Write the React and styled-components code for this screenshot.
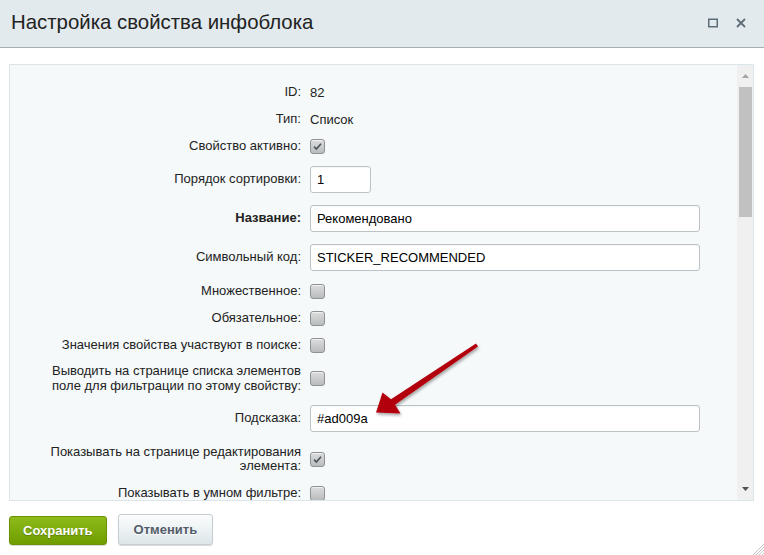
import React from "react";
import styled, { createGlobalStyle } from "styled-components";

const Global = createGlobalStyle`
  html, body { margin: 0; padding: 0; background: #fff; }
  body { font-family: "Liberation Sans", Arial, sans-serif; }
  * { box-sizing: border-box; }
`;

const Dialog = styled.div`
  position: relative;
  width: 764px;
  height: 555px;
  display: flex;
  flex-direction: column;
  background: #fff;
  overflow: hidden;
`;

const Header = styled.div`
  height: 48px;
  flex: none;
  background: #e3eaed;
  border-bottom: 1px solid #a6aeb2;
  display: flex;
  align-items: center;
  padding: 0 18px 2px 11px;
`;

const Title = styled.h1`
  margin: 0;
  flex: 1;
  font-weight: normal;
  font-size: 20.4px;
  color: #222;
`;

const HeaderIcons = styled.div`
  display: flex;
  align-items: center;
  gap: 18px;
`;

const Body = styled.div`
  padding: 16px 10px 0 9px;
`;

const Panel = styled.div`
  height: 437px;
  border: 1px solid #dce6ea;
  background: #f5f9f9;
  display: flex;
`;

const Content = styled.div`
  flex: 1;
  overflow: hidden;
  padding-top: 13.5px;
`;

const Row = styled.div`
  display: grid;
  grid-template-columns: 291px 1fr;
  column-gap: 9px;
  align-items: center;
  height: ${(p) => p.$h || 27}px;
  font-size: 13px;
  color: #222;
`;

const Label = styled.div`
  text-align: right;
  line-height: 14.5px;
  font-weight: ${(p) => (p.$bold ? "bold" : "normal")};
`;

const Value = styled.div`
  display: flex;
  align-items: center;
`;

const Input = styled.div`
  height: 27px;
  width: ${(p) => p.$w}px;
  background: #fff;
  border: 1px solid #bcc3c7;
  border-radius: 3px;
  padding: 0 6px;
  display: flex;
  align-items: center;
  font-size: 13px;
  color: #000;
  box-shadow: inset 0 1px 1px rgba(0,0,0,0.04);
`;

const Check = styled.span`
  width: 15px;
  height: 15px;
  border-radius: 3px;
  border: 1px solid #8e9295;
  background: linear-gradient(#dcdcdc, #b9bcbe);
  box-shadow: inset 0 1px 0 rgba(255,255,255,0.6);
  display: inline-flex;
  align-items: center;
  justify-content: center;
`;

const Scrollbar = styled.div`
  width: 16px;
  flex: none;
  background: #f0f0f0;
  display: flex;
  flex-direction: column;
  align-items: center;
  padding: 5px 0;
`;

const ArrowBtn = styled.div`
  height: 12px;
  display: flex;
  align-items: center;
  justify-content: center;
`;

const Thumb = styled.div`
  width: 13px;
  height: 130px;
  margin-top: 5px;
  background: #c1c1c1;
`;

const Track = styled.div`
  flex: 1;
`;

const Footer = styled.div`
  display: flex;
  align-items: center;
  gap: 11px;
  padding: 13px 9px 0 9px;
`;

const Button = styled.button`
  height: ${(p) => (p.$primary ? 29 : 31)}px;
  padding: 0 ${(p) => (p.$primary ? 13 : 15)}px;
  border-radius: 3px;
  font-family: "Liberation Sans", Arial, sans-serif;
  font-size: 13px;
  font-weight: bold;
  cursor: pointer;
  color: ${(p) => (p.$primary ? "#fff" : "#535c69")};
  border: 1px solid ${(p) => (p.$primary ? "#6a9200" : "#c6cdd3")};
  background: ${(p) =>
    p.$primary
      ? "linear-gradient(#8ebb1b, #6f9d00)"
      : "linear-gradient(#fbfdfd, #dde6e9)"};
  text-shadow: ${(p) => (p.$primary ? "0 1px 1px rgba(0,0,0,0.25)" : "0 1px 0 #fff")};
  box-shadow: 0 1px 1px rgba(0,0,0,0.15);
  margin-top: ${(p) => (p.$primary ? 1 : 0)}px;
`;

const Grip = styled.svg`
  position: absolute;
  right: 0;
  bottom: 0;
`;

const Overlay = styled.svg`
  position: absolute;
  left: 0;
  top: 0;
  pointer-events: none;
`;

function CheckBox({ checked }) {
  return (
    <Check>
      {checked && (
        <svg width="11" height="11" viewBox="0 0 11 11">
          <path d="M2 5.6 L4.4 8 L9 2.8" fill="none" stroke="#4b5258" strokeWidth="1.6" />
        </svg>
      )}
    </Check>
  );
}

const rows = [
  { label: "ID:", text: "82" },
  { label: "Тип:", text: "Список" },
  { label: "Свойство активно:", check: true },
  { label: "Порядок сортировки:", input: "1", w: 61, h: 39 },
  { label: "Название:", bold: true, input: "Рекомендовано", w: 390, h: 39 },
  { label: "Символьный код:", input: "STICKER_RECOMMENDED", w: 390, h: 40 },
  { label: "Множественное:", check: false },
  { label: "Обязательное:", check: false },
  { label: "Значения свойства участвуют в поиске:", check: false },
  {
    label: ["Выводить на странице списка элементов", "поле для фильтрации по этому свойству:"],
    check: false,
    h: 40,
  },
  { label: "Подсказка:", input: "#ad009a", w: 390, h: 40 },
  {
    label: ["Показывать на странице редактирования", "элемента:"],
    check: true,
    h: 41,
  },
  { label: "Показывать в умном фильтре:", check: false },
];

export default function App() {
  return (
    <>
      <Global />
      <Dialog>
        <Header>
          <Title>Настройка свойства инфоблока</Title>
          <HeaderIcons>
            <svg width="10" height="10" viewBox="0 0 10 10">
              <rect x="0.75" y="1.25" width="8.5" height="7.5" fill="none" stroke="#5d6d78" strokeWidth="1.5" />
            </svg>
            <svg width="10" height="10" viewBox="0 0 10 10">
              <path d="M1 1 L9 9 M9 1 L1 9" stroke="#5d6d78" strokeWidth="1.8" />
            </svg>
          </HeaderIcons>
        </Header>
        <Body>
          <Panel>
            <Content>
              {rows.map((r, i) => (
                <Row key={i} $h={r.h}>
                  <Label $bold={r.bold}>
                    {Array.isArray(r.label)
                      ? r.label.map((l, j) => <div key={j}>{l}</div>)
                      : r.label}
                  </Label>
                  <Value>
                    {r.text && r.text}
                    {r.input !== undefined && <Input $w={r.w}>{r.input}</Input>}
                    {r.check !== undefined && <CheckBox checked={r.check} />}
                  </Value>
                </Row>
              ))}
            </Content>
            <Scrollbar>
              <ArrowBtn>
                <svg width="7" height="4" viewBox="0 0 7 4">
                  <path d="M0 4 L3.5 0 L7 4 Z" fill="#a3a3a3" />
                </svg>
              </ArrowBtn>
              <Thumb />
              <Track />
              <ArrowBtn>
                <svg width="7" height="4" viewBox="0 0 7 4">
                  <path d="M0 0 L3.5 4 L7 0 Z" fill="#505050" />
                </svg>
              </ArrowBtn>
            </Scrollbar>
          </Panel>
        </Body>
        <Footer>
          <Button $primary>Сохранить</Button>
          <Button>Отменить</Button>
        </Footer>
        <Grip width="12" height="12" viewBox="0 0 12 12">
          <path d="M12 1 L1 12 M12 4 L4 12 M12 7 L7 12 M12 10 L10 12" stroke="#b7b7b7" strokeWidth="0.8" />
        </Grip>
        <Overlay width="764" height="555" viewBox="0 0 764 555">
          <defs>
            <filter id="sh" x="-20%" y="-20%" width="140%" height="140%">
              <feGaussianBlur in="SourceAlpha" stdDeviation="1.5" />
              <feOffset dx="1" dy="2" result="b" />
              <feComponentTransfer>
                <feFuncA type="linear" slope="0.35" />
              </feComponentTransfer>
              <feMerge>
                <feMergeNode />
                <feMergeNode in="SourceGraphic" />
              </feMerge>
            </filter>
          </defs>
          <polygon
            filter="url(#sh)"
            fill="#b3000c"
            points="476,343.4 391,399.2 382.5,392.5 376,412.5 400.5,413.5 395,404.8 478,346.6"
          />
        </Overlay>
      </Dialog>
    </>
  );
}
